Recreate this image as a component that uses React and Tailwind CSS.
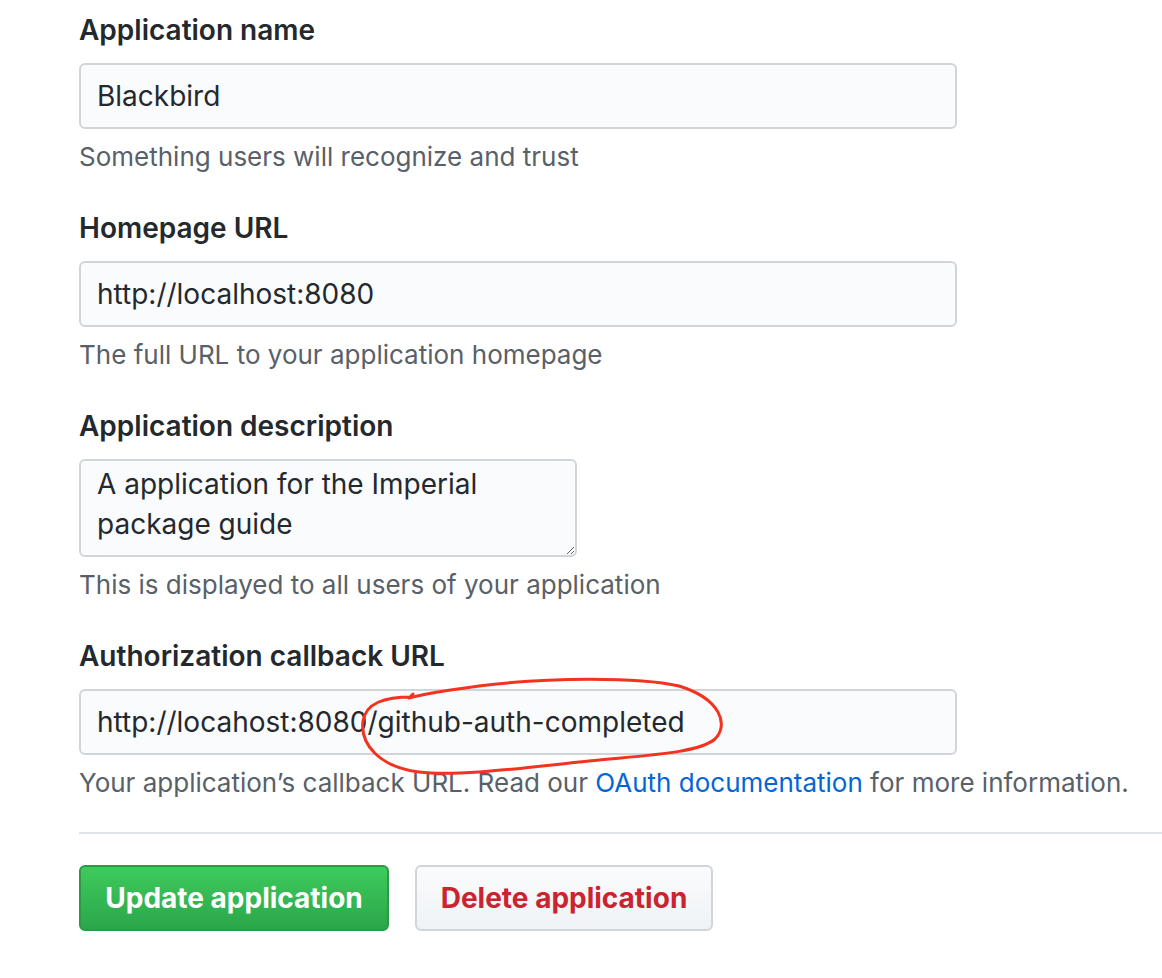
import React from 'react';

const font = { fontFamily: 'Inter, "Liberation Sans", sans-serif' };

const Field = ({ label, note, children }) => (
    <div className="flex flex-col">
        <label className="text-[28px] leading-[42px] font-semibold text-[#24292e]">{label}</label>
        <div className="mt-[12px]">{children}</div>
        <p className="mt-[8px] text-[26px] leading-[39px] text-[#586069] whitespace-nowrap">{note}</p>
    </div>
);

const TextInput = ({ value }) => (
    <input
        readOnly
        value={value}
        className="block w-[878px] h-[66px] px-[16px] rounded-[6px] border-2 border-[#d1d5da] bg-[#fafbfc] text-[28px] text-[#24292e] outline-none"
    />
);

export default function App() {
    return (
        <div className="w-full h-[978px] bg-white overflow-hidden pl-[79px] pt-[9px]" style={font}>
            <div className="flex flex-col gap-[31px]">
                <Field label="Application name" note="Something users will recognize and trust">
                    <TextInput value="Blackbird" />
                </Field>

                <Field label="Homepage URL" note="The full URL to your application homepage">
                    <TextInput value="http://localhost:8080" />
                </Field>

                <Field label="Application description" note="This is displayed to all users of your application">
                    <textarea
                        readOnly
                        value={'A application for the Imperial\npackage guide'}
                        className="block w-[498px] h-[98px] px-[16px] pt-[3px] rounded-[6px] border-2 border-[#d1d5da] bg-[#fafbfc] text-[28px] leading-[40px] text-[#24292e] outline-none resize-y overflow-hidden"
                    />
                </Field>

                <Field
                    label="Authorization callback URL"
                    note={
                        <>
                            Your application’s callback URL. Read our{' '}
                            <a className="text-[#0366d6]">OAuth documentation</a> for more information.
                        </>
                    }
                >
                    <div className="relative">
                        <TextInput value="http://locahost:8080/github-auth-completed" />
                        {/* red hand-drawn annotation */}
                        <svg
                            className="absolute left-0 top-0 pointer-events-none overflow-visible"
                            width="878"
                            height="66"
                            fill="none"
                        >
                            <path
                                d="M 333 8 C 305 8, 287 14, 284 32 C 281 55, 300 78, 340 83 C 380 88, 450 78, 510 72 C 570 66, 620 64, 636 50 C 650 36, 642 10, 600 -3 C 560 -12, 470 -12, 400 -3 C 370 1, 345 5, 330 9 L 334 5"
                                stroke="#f3321f"
                                strokeWidth="3"
                                strokeLinecap="round"
                                strokeLinejoin="round"
                            />
                        </svg>
                    </div>
                </Field>
            </div>

            <div className="mt-[30px] h-[2px] bg-[#e1e4e8]" />

            <div className="mt-[31px] flex gap-[26px]">
                <button className="w-[310px] h-[66px] rounded-[6px] border-2 border-[#2a9a45] bg-gradient-to-b from-[#3ecb5c] to-[#2ba64b] text-white text-[28px] font-bold">
                    Update application
                </button>
                <button className="w-[298px] h-[66px] rounded-[6px] border-2 border-[#d1d5da] bg-gradient-to-b from-[#fafbfc] to-[#eff3f6] text-[#cb2431] text-[28px] font-bold">
                    Delete application
                </button>
            </div>
        </div>
    );
}
